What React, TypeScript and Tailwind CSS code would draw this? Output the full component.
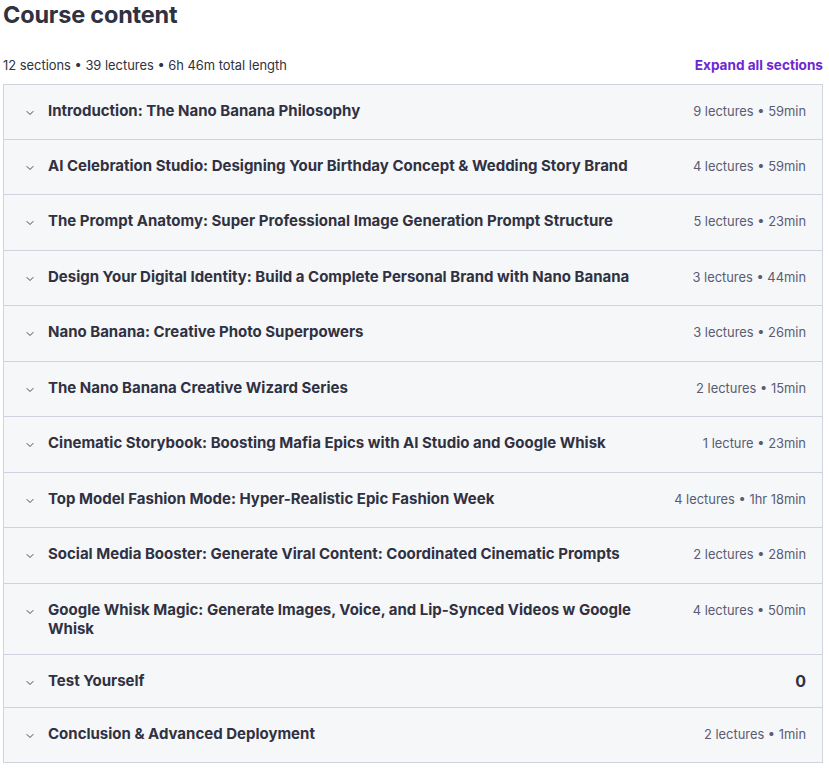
import { ChevronDown } from 'lucide-react';

interface Section {
    title: string;
    meta: string;
    bold?: boolean;
}

const sections: Section[] = [
    { title: 'Introduction: The Nano Banana Philosophy', meta: '9 lectures • 59min' },
    { title: 'AI Celebration Studio: Designing Your Birthday Concept & Wedding Story Brand', meta: '4 lectures • 59min' },
    { title: 'The Prompt Anatomy: Super Professional Image Generation Prompt Structure', meta: '5 lectures • 23min' },
    { title: 'Design Your Digital Identity: Build a Complete Personal Brand with Nano Banana', meta: '3 lectures • 44min' },
    { title: 'Nano Banana: Creative Photo Superpowers', meta: '3 lectures • 26min' },
    { title: 'The Nano Banana Creative Wizard Series', meta: '2 lectures • 15min' },
    { title: 'Cinematic Storybook: Boosting Mafia Epics with AI Studio and Google Whisk', meta: '1 lecture • 23min' },
    { title: 'Top Model Fashion Mode: Hyper-Realistic Epic Fashion Week', meta: '4 lectures • 1hr 18min' },
    { title: 'Social Media Booster: Generate Viral Content: Coordinated Cinematic Prompts', meta: '2 lectures • 28min' },
    { title: 'Google Whisk Magic: Generate Images, Voice, and Lip-Synced Videos w Google Whisk', meta: '4 lectures • 50min' },
    { title: 'Test Yourself', meta: '0', bold: true },
    { title: 'Conclusion & Advanced Deployment', meta: '2 lectures • 1min' },
];

const SectionRow = ({ title, meta, bold }: Section) => (
    <div className="flex items-start gap-3 pl-5 pr-4 py-4 bg-[#f6f7f9] border-b border-[#d1d2e0] last:border-b-0">
        <ChevronDown size={12} strokeWidth={1.8} className="mt-[6px] shrink-0 text-[#303141]" />
        <h3 className="flex-1 min-w-0 pr-10 text-[15px] leading-[1.28] font-bold text-[#303141]">{title}</h3>
        {bold ? (
            <span className="shrink-0 text-base leading-[1.25] font-bold text-[#303141]">{meta}</span>
        ) : (
            <span className="shrink-0 text-[12.9px] leading-[1.74] text-[#595c73]">{meta}</span>
        )}
    </div>
);

export default function App() {
    return (
        <div className="min-h-screen bg-white pl-[3px] pr-[6px] font-['Inter',sans-serif] text-[#303141]">
            <h2 className="pt-[1px] text-[23.5px] leading-[1.2] font-bold tracking-[-0.2px]">Course content</h2>
            <div className="mt-[26px] flex items-center justify-between">
                <span className="text-[12.9px] leading-[1.5] text-[#303141]">
                    12 sections • 39 lectures • 6h 46m total length
                </span>
                <button className="text-[13.6px] leading-[1.5] font-bold text-[#6d28d2]">Expand all sections</button>
            </div>
            <div className="mt-[8px] border border-[#d1d2e0]">
                {sections.map((s) => (
                    <SectionRow key={s.title} {...s} />
                ))}
            </div>
        </div>
    );
}
